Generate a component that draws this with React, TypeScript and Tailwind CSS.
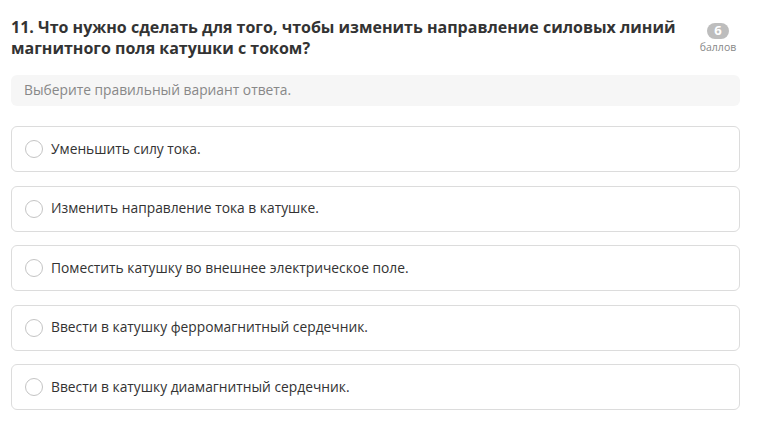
const options = [
  'Уменьшить силу тока.',
  'Изменить направление тока в катушке.',
  'Поместить катушку во внешнее электрическое поле.',
  'Ввести в катушку ферромагнитный сердечник.',
  'Ввести в катушку диамагнитный сердечник.',
]

export default function App() {
  return (
    <div className="min-h-screen bg-white pl-[11px] pr-[31px] pt-[17px] font-['Open_Sans',sans-serif] text-[#333]">
      <div className="flex items-start justify-between">
        <h2 className="w-[690px] text-[16px] font-bold leading-[21px] text-[#333]">
          11. Что нужно сделать для того, чтобы изменить направление силовых линий магнитного поля катушки с током?
        </h2>
        <div className="mr-[4px] mt-[6px] flex w-[36px] flex-col items-center">
          <span className="flex h-[16px] w-[22px] items-center justify-center rounded-full bg-[#bdbdbd] text-[13px] font-bold text-white">
            6
          </span>
          <span className="mt-[2px] text-[10.5px] leading-[12px] text-[#888]">баллов</span>
        </div>
      </div>
      <div className="mt-[16px] flex h-[31px] items-center rounded-md bg-[#f6f6f6] px-[13px] text-[13.8px] text-[#888]">
        Выберите правильный вариант ответа.
      </div>
      <div className="mt-[20px] flex flex-col gap-[13.5px]">
        {options.map(o => (
          <label
            key={o}
            className="flex h-[46px] cursor-pointer items-center gap-[8px] rounded-md border border-[#dcdcdc] px-[13px]"
          >
            <span className="h-[18px] w-[18px] shrink-0 rounded-full border border-[#c4c4c4] bg-white"></span>
            <span className="text-[13.8px] text-[#333]">{o}</span>
          </label>
        ))}
      </div>
    </div>
  )
}
